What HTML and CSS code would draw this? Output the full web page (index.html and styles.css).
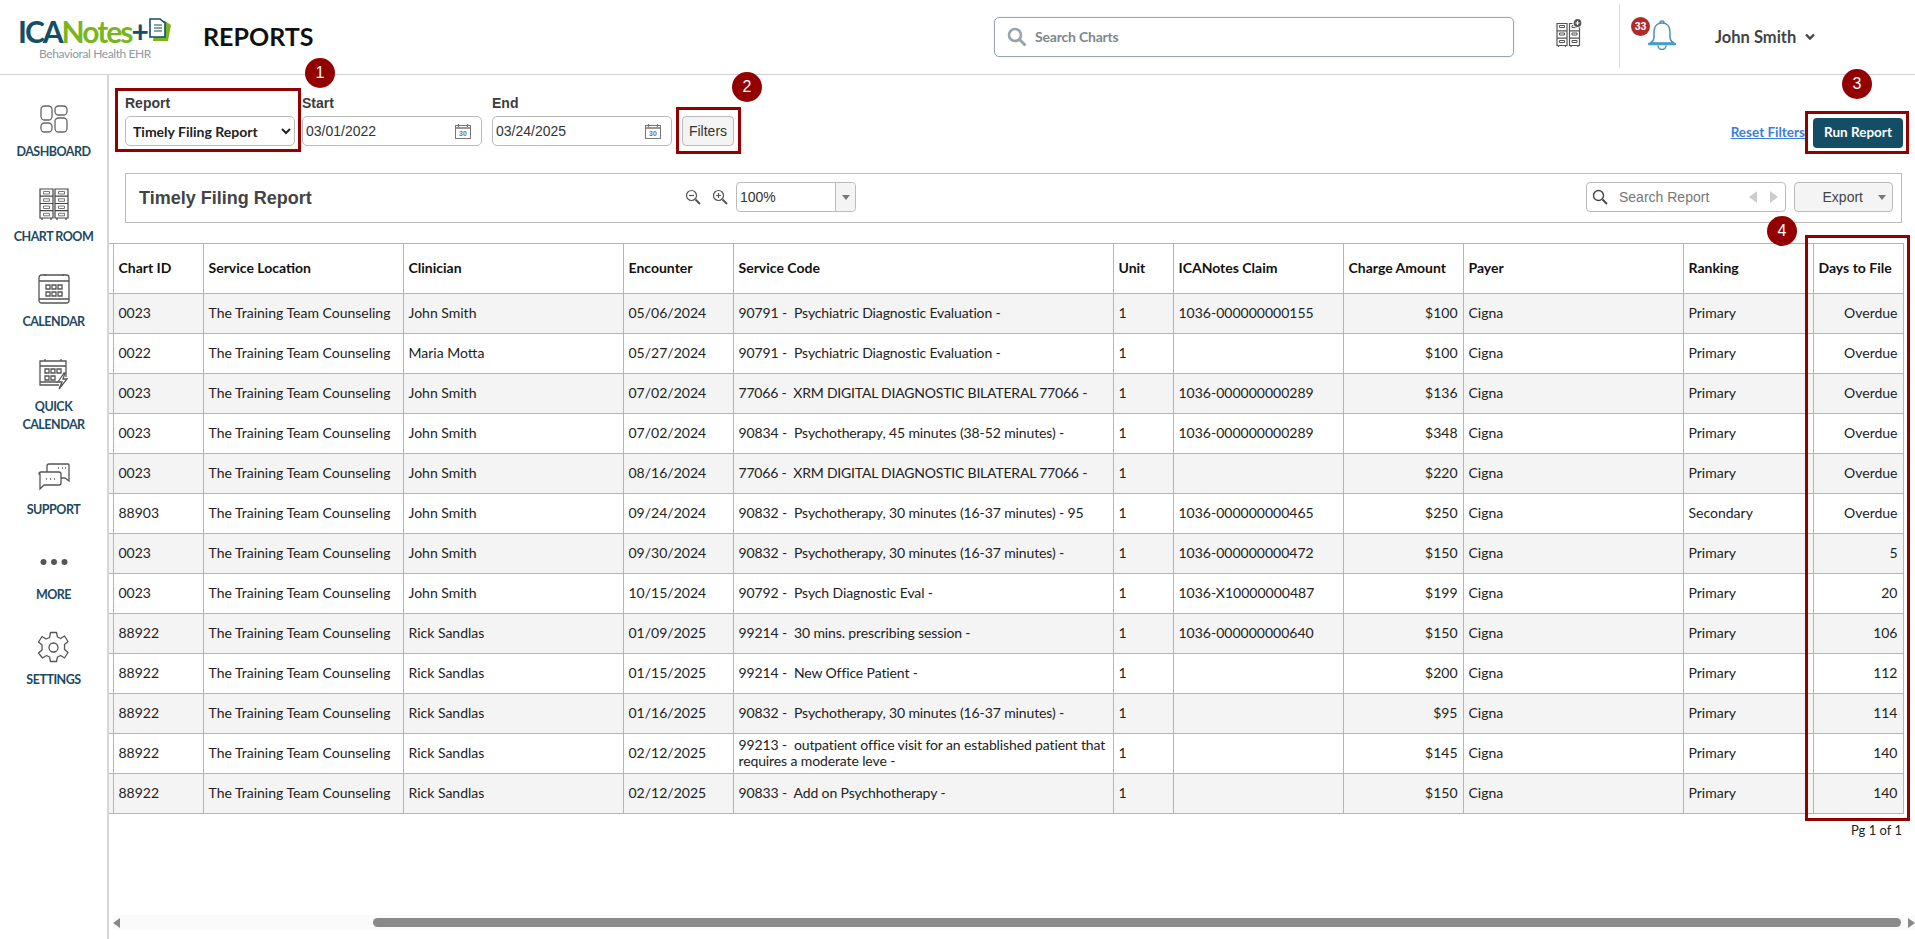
FILE: index.html
```html
<!DOCTYPE html>
<html lang="en">
<head>
<meta charset="utf-8">
<title>Reports</title>
<link rel="stylesheet" href="styles.css">
</head>
<body>
<div class="app">
  <header class="topbar">
    <div class="logo">
      <div class="logo-main"><span class="navy">ICA</span><span class="green">Notes</span><span class="navy">+</span>
        <svg class="logo-doc" width="23" height="26" viewBox="0 0 23 26"><path d="M7 4h9l6 4-3 16H4z" fill="#7ab51d"/><path d="M1 2h10l5 4v14H1z" fill="#fff" stroke="#134e66" stroke-width="1.6"/><path d="M5 8h8M5 11h8M5 14h8" stroke="#134e66" stroke-width="1"/></svg>
      </div>
      <div class="logo-sub">Behavioral Health EHR</div>
    </div>
    <h1 class="page-title">REPORTS</h1>
    <div class="chart-search">
      <svg width="20" height="20" viewBox="0 0 20 20"><circle cx="8" cy="8" r="6" fill="none" stroke="#98a3aa" stroke-width="2.6"/><path d="M12.5 12.5l6 6" stroke="#98a3aa" stroke-width="3"/></svg>
      <span>Search Charts</span>
    </div>
    <svg class="cabinet-add" width="28" height="30" viewBox="0 0 28 30" fill="none" stroke="#555" stroke-width="1.2">
      <path d="M1 5.500h10v22H1zM1 12.800h10M1 20.100h10M13.500 5.500h10v22h-10zM13.500 12.800h10M13.500 20.100h10M2.500 27.500v1.500M9.500 27.500v1.500M15 27.500v1.500M22 27.500v1.500"/>
      <path d="M3.500 7.500h5v2h-5zM3.500 15h5v2h-5zM3.500 22.500h5v2h-5zM16 7.500h5v2h-5zM16 15h5v2h-5zM16 22.500h5v2h-5z" stroke-width="1"/>
      <circle cx="21.500" cy="5" r="4.500" fill="#555" stroke="#fff"/><path d="M19.500 5h4M21.500 3v4" stroke="#fff"/>
    </svg>
    <div class="divider"></div>
    <div class="bell-wrap">
      <svg width="30" height="30" viewBox="0 0 30 30" fill="none" stroke="#4d8fb5" stroke-width="1.500"><path d="M15 3c-5.500 0-8 4-8 9v5c0 2.500-2 5-4 6h24c-2-1-4-3.500-4-6v-5c0-5-2.500-9-8-9z" fill="#fff"/><path d="M2 24h26" stroke="#3fa0d8" stroke-width="2.400" stroke-linecap="round"/><path d="M11 25.500a4 4 0 0 0 8 0"/><path d="M13 3a2 2 0 0 1 4 0"/></svg>
      <span class="badge">33</span>
    </div>
    <div class="user">John Smith</div>
    <svg class="user-caret" width="12" height="8" viewBox="0 0 12 8" fill="none" stroke="#444" stroke-width="2.400"><path d="M2 1.500l4 4 4-4"/></svg>
  </header>

  <div class="body-row">
    <nav class="sidebar">
      <a class="nav-item"><span class="nav-icon"><svg width="28" height="28" viewBox="0 0 28 28" fill="none" stroke="#666" stroke-width="1.300"><rect x="1" y="1" width="11" height="14" rx="3.500"/><rect x="15" y="1" width="12" height="9" rx="3.500"/><rect x="1" y="18" width="11" height="9" rx="3.500"/><rect x="15" y="13" width="12" height="14" rx="3.500"/></svg></span><span class="nav-label">DASHBOARD</span></a>
      <a class="nav-item"><span class="nav-icon"><svg width="30" height="33" viewBox="0 0 30 33" fill="none" stroke="#444" stroke-width="1.200"><path d="M1 1h13v29H1zM16 1h13v29H16zM1 8.200h13M1 15.500h13M1 22.700h13M16 8.200h13M16 15.500h13M16 22.700h13M3 30v2M12 30v2M18 30v2M27 30v2"/><path d="M4.500 3.500h6v2.500h-6zM4.500 10.800h6v2.500h-6zM4.500 18h6v2.500h-6zM4.500 25.300h6v2.500h-6zM19.500 3.500h6v2.500h-6zM19.500 10.800h6v2.500h-6zM19.500 18h6v2.500h-6zM19.500 25.300h6v2.500h-6z" stroke="#777" stroke-width="1"/></svg></span><span class="nav-label">CHART ROOM</span></a>
      <a class="nav-item"><span class="nav-icon"><svg width="32" height="32" viewBox="0 0 32 32" fill="none" stroke="#555" stroke-width="1.300"><rect x="1" y="2" width="30" height="28" rx="2.500"/><path d="M1 8h30M1 26h30M7 1v2M25 1v2"/><path d="M8 12h4v4H8zM14 12h4v4h-4zM20 12h4v4h-4zM8 19h4v4H8zM14 19h4v4h-4zM20 19h4v4h-4z"/></svg></span><span class="nav-label">CALENDAR</span></a>
      <a class="nav-item"><span class="nav-icon"><svg width="32" height="33" viewBox="0 0 32 33" fill="none" stroke="#555" stroke-width="1.300"><path d="M21 27H2V3h26v16"/><path d="M2 8h26M2 24h18M7 1v2M23 1v2"/><path d="M7 11h4v4H7zM13 11h4v4h-4zM19 11h4v4h-4zM7 18h4v4H7zM13 18h4v4h-4z"/><path d="M26 15l-6 9h4l-3 7 8-10h-4l2-6z" fill="#fff"/></svg></span><span class="nav-label">QUICK<br>CALENDAR</span></a>
      <a class="nav-item"><span class="nav-icon"><svg width="32" height="28" viewBox="0 0 32 28" fill="none" stroke="#555" stroke-width="1.300"><path d="M9 9V3a2 2 0 0 1 2-2h19a1 1 0 0 1 1 1v16l-4-3h-6"/><path d="M1 11a2 2 0 0 1 2-2h18a2 2 0 0 1 2 2v9a2 2 0 0 1-2 2H6l-4 4V11z" fill="#fff"/><path d="M8 16h1M12 16h1M16 16h1M20 5h1M24 5h1M27 5h1"/></svg></span><span class="nav-label">SUPPORT</span></a>
      <a class="nav-item"><span class="nav-icon"><svg width="28" height="8" viewBox="0 0 28 8" fill="#555"><circle cx="3.500" cy="4" r="3"/><circle cx="14" cy="4" r="3"/><circle cx="24.500" cy="4" r="3"/></svg></span><span class="nav-label">MORE</span></a>
      <a class="nav-item"><span class="nav-icon"><svg width="33" height="33" viewBox="0 0 33 33" fill="none" stroke="#555" stroke-width="1.300"><circle cx="16.500" cy="16.500" r="4.500"/><path d="M13.500 1.500h6l1 4.500 3 1.500 4-2.500 3.500 5.500-3.500 3v5l3.500 3-3.500 5.500-4-2.500-3 1.500-1 4.500h-6l-1-4.500-3-1.500-4 2.500L1.500 22l3.500-3v-5l-3.500-3L5 5.500l4 2.500 3.500-1.500z" stroke-linejoin="round"/></svg></span><span class="nav-label">SETTINGS</span></a>
    </nav>

    <main class="main">
      <section class="filters">
        <div class="field-group">
          <label class="field-label">Report</label>
          <select class="report-select"><option>Timely Filing Report</option></select>
        </div>
        <div class="field-group">
          <label class="field-label">Start</label>
          <div class="date-field"><span>03/01/2022</span>
            <svg width="16" height="16" viewBox="0 0 16 16" fill="none" stroke="#777"><rect x="0.500" y="2.500" width="15" height="13"/><path d="M0.500 5h15M3.500 1v3M12.500 1v3" stroke-width="1.300"/><text x="8" y="13" font-size="7" font-family="Liberation Sans" font-weight="700" text-anchor="middle" fill="#777" stroke="none">30</text></svg>
          </div>
        </div>
        <div class="field-group">
          <label class="field-label">End</label>
          <div class="date-field"><span>03/24/2025</span>
            <svg width="16" height="16" viewBox="0 0 16 16" fill="none" stroke="#777"><rect x="0.500" y="2.500" width="15" height="13"/><path d="M0.500 5h15M3.500 1v3M12.500 1v3" stroke-width="1.300"/><text x="8" y="13" font-size="7" font-family="Liberation Sans" font-weight="700" text-anchor="middle" fill="#777" stroke="none">30</text></svg>
          </div>
        </div>
        <button class="filters-btn">Filters</button>
        <div class="run-actions">
          <a class="reset-link">Reset Filters</a>
          <button class="run-btn">Run Report</button>
        </div>
      </section>

      <section class="report-toolbar">
        <div class="report-title">Timely Filing Report</div>
        <div class="zoom-tools">
          <svg width="16" height="16" viewBox="0 0 16 16" fill="none" stroke="#555" stroke-width="1.200"><circle cx="6.500" cy="6.500" r="5"/><path d="M4 6.500h5"/><path d="M10.500 10.500l4.500 4.500" stroke-width="2"/></svg>
          <svg width="16" height="16" viewBox="0 0 16 16" fill="none" stroke="#555" stroke-width="1.200"><circle cx="6.500" cy="6.500" r="5"/><path d="M4 6.500h5M6.500 4v5"/><path d="M10.500 10.500l4.500 4.500" stroke-width="2"/></svg>
          <div class="zoom-combo"><span class="zoom-value">100%</span><span class="zoom-arrow"><i class="tri"></i></span></div>
        </div>
        <div class="report-search">
          <svg width="16" height="16" viewBox="0 0 16 16" fill="none" stroke="#444" stroke-width="1.400"><circle cx="6.500" cy="6.500" r="5"/><path d="M10.500 10.500l4.500 4.500" stroke-width="1.800"/></svg>
          <span class="report-search-text">Search Report</span>
          <i class="tri-left"></i><i class="tri-right"></i>
        </div>
        <div class="export-btn"><span>Export</span><i class="tri"></i></div>
      </section>

      <table class="report-table">
        <colgroup>
          <col class="c-sp"><col class="c-id"><col class="c-loc"><col class="c-clin"><col class="c-enc"><col class="c-code"><col class="c-unit"><col class="c-claim"><col class="c-amt"><col class="c-payer"><col class="c-rank"><col class="c-days">
        </colgroup>
        <thead>
          <tr><th class="sp"></th><th>Chart ID</th><th>Service Location</th><th>Clinician</th><th>Encounter</th><th>Service Code</th><th>Unit</th><th>ICANotes Claim</th><th>Charge Amount</th><th>Payer</th><th>Ranking</th><th>Days to File</th></tr>
        </thead>
        <tbody>
          <tr><td class="sp"></td><td>0023</td><td>The Training Team Counseling</td><td>John Smith</td><td>05/06/2024</td><td class="code">90791 -&nbsp; Psychiatric Diagnostic Evaluation -</td><td>1</td><td>1036-000000000155</td><td class="r">$100</td><td>Cigna</td><td>Primary</td><td class="r">Overdue</td></tr>
          <tr><td class="sp"></td><td>0022</td><td>The Training Team Counseling</td><td>Maria Motta</td><td>05/27/2024</td><td class="code">90791 -&nbsp; Psychiatric Diagnostic Evaluation -</td><td>1</td><td></td><td class="r">$100</td><td>Cigna</td><td>Primary</td><td class="r">Overdue</td></tr>
          <tr><td class="sp"></td><td>0023</td><td>The Training Team Counseling</td><td>John Smith</td><td>07/02/2024</td><td class="code caps">77066 -&nbsp; XRM DIGITAL DIAGNOSTIC BILATERAL 77066 -</td><td>1</td><td>1036-000000000289</td><td class="r">$136</td><td>Cigna</td><td>Primary</td><td class="r">Overdue</td></tr>
          <tr><td class="sp"></td><td>0023</td><td>The Training Team Counseling</td><td>John Smith</td><td>07/02/2024</td><td class="code">90834 -&nbsp; Psychotherapy, 45 minutes (38-52 minutes) -</td><td>1</td><td>1036-000000000289</td><td class="r">$348</td><td>Cigna</td><td>Primary</td><td class="r">Overdue</td></tr>
          <tr><td class="sp"></td><td>0023</td><td>The Training Team Counseling</td><td>John Smith</td><td>08/16/2024</td><td class="code caps">77066 -&nbsp; XRM DIGITAL DIAGNOSTIC BILATERAL 77066 -</td><td>1</td><td></td><td class="r">$220</td><td>Cigna</td><td>Primary</td><td class="r">Overdue</td></tr>
          <tr><td class="sp"></td><td>88903</td><td>The Training Team Counseling</td><td>John Smith</td><td>09/24/2024</td><td class="code">90832 -&nbsp; Psychotherapy, 30 minutes (16-37 minutes) - 95</td><td>1</td><td>1036-000000000465</td><td class="r">$250</td><td>Cigna</td><td>Secondary</td><td class="r">Overdue</td></tr>
          <tr><td class="sp"></td><td>0023</td><td>The Training Team Counseling</td><td>John Smith</td><td>09/30/2024</td><td class="code">90832 -&nbsp; Psychotherapy, 30 minutes (16-37 minutes) -</td><td>1</td><td>1036-000000000472</td><td class="r">$150</td><td>Cigna</td><td>Primary</td><td class="r">5</td></tr>
          <tr><td class="sp"></td><td>0023</td><td>The Training Team Counseling</td><td>John Smith</td><td>10/15/2024</td><td class="code">90792 -&nbsp; Psych Diagnostic Eval -</td><td>1</td><td>1036-X10000000487</td><td class="r">$199</td><td>Cigna</td><td>Primary</td><td class="r">20</td></tr>
          <tr><td class="sp"></td><td>88922</td><td>The Training Team Counseling</td><td>Rick Sandlas</td><td>01/09/2025</td><td class="code">99214 -&nbsp; 30 mins. prescribing session -</td><td>1</td><td>1036-000000000640</td><td class="r">$150</td><td>Cigna</td><td>Primary</td><td class="r">106</td></tr>
          <tr><td class="sp"></td><td>88922</td><td>The Training Team Counseling</td><td>Rick Sandlas</td><td>01/15/2025</td><td class="code">99214 -&nbsp; New Office Patient -</td><td>1</td><td></td><td class="r">$200</td><td>Cigna</td><td>Primary</td><td class="r">112</td></tr>
          <tr><td class="sp"></td><td>88922</td><td>The Training Team Counseling</td><td>Rick Sandlas</td><td>01/16/2025</td><td class="code">90832 -&nbsp; Psychotherapy, 30 minutes (16-37 minutes) -</td><td>1</td><td></td><td class="r">$95</td><td>Cigna</td><td>Primary</td><td class="r">114</td></tr>
          <tr><td class="sp"></td><td>88922</td><td>The Training Team Counseling</td><td>Rick Sandlas</td><td>02/12/2025</td><td class="code">99213 -&nbsp; outpatient office visit for an established patient that requires a moderate leve -</td><td>1</td><td></td><td class="r">$145</td><td>Cigna</td><td>Primary</td><td class="r">140</td></tr>
          <tr><td class="sp"></td><td>88922</td><td>The Training Team Counseling</td><td>Rick Sandlas</td><td>02/12/2025</td><td class="code">90833 -&nbsp; Add on Psychhotherapy -</td><td>1</td><td></td><td class="r">$150</td><td>Cigna</td><td>Primary</td><td class="r">140</td></tr>
        </tbody>
      </table>
      <div class="pager">Pg 1 of 1</div>

      <div class="hscroll">
        <i class="tri-left dark"></i>
        <div class="hscroll-track"><div class="hscroll-thumb"></div></div>
        <i class="tri-right dark"></i>
      </div>
    </main>
  </div>

  <div class="mark mark-1"></div>
  <div class="mark mark-2"></div>
  <div class="mark mark-3"></div>
  <div class="mark mark-4"></div>
  <div class="step step-1">1</div>
  <div class="step step-2">2</div>
  <div class="step step-3">3</div>
  <div class="step step-4">4</div>
</div>
</body>
</html>
```
FILE: styles.css
```css
* { box-sizing: border-box; }
html, body { margin: 0; height: 100%; overflow: hidden; background: #fff; }
body { font-family: "Lato", "Liberation Sans", sans-serif; color: #222; }
.app { position: relative; height: 939px; display: flex; flex-direction: column; }

.topbar { height: 75px; flex: none; display: flex; align-items: center; border-bottom: 1px solid #d0d0d0; padding-left: 18px; }
.logo { width: 185px; flex: none; margin-top: 2px; }
.logo-main { display: flex; align-items: center; height: 30px; font-size: 30px; font-weight: 700; letter-spacing: -2px; line-height: 30px; white-space: nowrap; }
.navy { color: #134e66; }
.green { color: #7ab51d; }
.logo-doc { margin-left: 2px; margin-top: -1px; }
.logo-sub { font-size: 12px; line-height: 15px; letter-spacing: -0.4px; color: #8b9aa3; margin-left: 21px; }
.page-title { margin: 0 0 2px; width: 791px; flex: none; font-size: 25px; font-weight: 700; color: #111; line-height: 30px; }
.chart-search { width: 520px; height: 40px; flex: none; margin-bottom: 1px; display: flex; align-items: center; gap: 8px; padding-left: 12px; border: 1px solid #9aa5ad; border-radius: 5px; box-shadow: 0 0 2px #d8dde0; font-size: 14px; font-weight: 700; color: #7d878e; letter-spacing: -0.2px; }
.cabinet-add { margin-left: 42px; flex: none; margin-bottom: 8px; }
.divider { width: 1px; height: 64px; background: #d8d8d8; margin-left: 35px; margin-bottom: 2px; flex: none; }
.bell-wrap { position: relative; width: 36px; height: 32px; margin-left: 21px; flex: none; display: flex; justify-content: flex-end; margin-bottom: 3px; }
.badge { position: absolute; left: -10px; top: -3px; width: 19px; height: 19px; border-radius: 50%; background: #b02a2a; color: #fff; font: 700 10.500px/19px "Liberation Sans", sans-serif; text-align: center; }
.user { margin-left: 38px; font-size: 16.500px; font-weight: 700; color: #444; flex: none; }
.user-caret { margin-left: 8px; flex: none; }

.body-row { flex: 1; display: flex; min-height: 0; }
.sidebar { width: 109px; flex: none; display: flex; flex-direction: column; gap: 26px; padding-top: 27px; border-right: 2px solid #d6d6d6; }
.nav-item { display: flex; flex-direction: column; align-items: center; gap: 7px; }
.nav-icon { height: 34px; display: flex; align-items: center; justify-content: center; }
.nav-label { font-size: 12.500px; line-height: 18px; letter-spacing: -0.5px; font-weight: 700; color: #1d4a60; text-align: center; }

.main { flex: 1; min-width: 0; display: flex; flex-direction: column; }
.filters { display: flex; align-items: flex-end; padding: 20px 12px 0 16px; height: 71px; flex: none; }
.field-group { display: flex; flex-direction: column; gap: 5px; margin-right: 10px; }
.field-group:first-child { margin-right: 7px; }
.field-label { font: 700 14px/16px "Liberation Sans", sans-serif; color: #3c3c3c; }
.report-select { width: 170px; height: 30px; border: 1px solid #bbb; border-radius: 5px; padding: 0 0 0 3px; background: #fff; font: 700 14px "Lato", sans-serif; color: #222; }
.date-field { width: 180px; height: 30px; border: 1px solid #bbb; border-radius: 5px; display: flex; align-items: center; justify-content: space-between; padding: 0 10px 0 3px; font: 14px "Liberation Sans", sans-serif; color: #333; }
.filters-btn { width: 52px; height: 30px; border: 1px solid #bbb; border-radius: 4px; background: #f4f4f4; font: 14px "Liberation Sans", sans-serif; color: #333; padding: 0; }
.run-actions { margin-left: auto; display: flex; align-items: center; gap: 8px; margin-bottom: -2px; }
.reset-link { font-size: 13.500px; font-weight: 700; color: #3b7ddd; text-decoration: underline; position: relative; top: -1px; }
.run-btn { width: 90px; height: 30px; border: 0; border-radius: 4px; background: #134e66; color: #fff; font: 700 13.500px "Lato", sans-serif; padding: 0 0 2px; }

.report-toolbar { margin: 27px 13px 0 16px; height: 50px; flex: none; border: 1px solid #bbb; display: flex; align-items: center; padding: 0 8px 0 13px; }
.report-title { width: 546px; flex: none; padding-top: 1px; font: 700 18px "Liberation Sans", sans-serif; color: #444; }
.zoom-tools { display: flex; align-items: center; gap: 11px; margin-bottom: 2px; }
.zoom-combo { width: 120px; height: 30px; border: 1px solid #bbb; border-radius: 4px; display: flex; font: 14px/28px "Liberation Sans", sans-serif; color: #333; margin-left: -3px; }
.zoom-value { flex: 1; padding-left: 3px; }
.zoom-arrow { width: 20px; border-left: 1px solid #bbb; background: #f4f4f4; display: flex; align-items: center; justify-content: center; border-radius: 0 4px 4px 0; }
.tri { display: block; width: 0; height: 0; border: 4px solid transparent; border-top: 5px solid #777; border-bottom: 0; }
.report-search { margin-left: auto; margin-bottom: 2px; width: 200px; height: 30px; border: 1px solid #bbb; border-radius: 4px; display: flex; align-items: center; padding-left: 5px; font: 14px "Liberation Sans", sans-serif; color: #777; }
.report-search-text { margin-left: 11px; flex: 1; }
.tri-left, .tri-right { display: block; width: 0; height: 0; border: 6.500px solid transparent; }
.tri-left { border-right: 8px solid #ccc; border-left: 0; margin-right: 13px; }
.tri-right { border-left: 8px solid #ccc; border-right: 0; margin-right: 7px; }
.export-btn { margin-left: 8px; margin-bottom: 2px; width: 99px; height: 30px; border: 1px solid #bbb; border-radius: 4px; background: #f4f4f4; display: flex; align-items: center; justify-content: flex-end; gap: 15px; padding-right: 6px; font: 14px "Liberation Sans", sans-serif; color: #444; }

.report-table { margin-top: 20px; width: 1794px; flex: none; table-layout: fixed; border-collapse: collapse; font-size: 14px; line-height: 16px; color: #222; }
.c-sp { width: 4px; } .c-id { width: 90px; } .c-loc { width: 200px; } .c-clin { width: 220px; } .c-enc { width: 110px; } .c-code { width: 380px; } .c-unit { width: 60px; } .c-claim { width: 170px; } .c-amt { width: 120px; } .c-payer { width: 220px; } .c-rank { width: 130px; } .c-days { width: 90px; }
.report-table th, .report-table td { border: 1px solid #b5b5b5; padding: 0 5px 2px; text-align: left; vertical-align: middle; }
.report-table .sp { padding: 0; border-left: 0; }
.report-table .code { padding-right: 2px; letter-spacing: -0.12px; }
.report-table .caps { letter-spacing: -0.2px; }
.report-table thead tr { height: 50px; }
.report-table tbody tr { height: 40px; }
.report-table tbody tr:nth-child(odd) { background: #f4f4f4; }
.report-table th { font-weight: 700; color: #111; }
.report-table .r { text-align: right; }
.pager { flex: none; text-align: right; padding-right: 13px; margin-top: 8px; font-size: 13px; line-height: 16px; color: #222; }

.hscroll { margin-top: auto; margin-bottom: 9px; margin-left: 4px; height: 15px; flex: none; display: flex; align-items: center; background: #fafafa; }
.hscroll-track { flex: 1; height: 9px; padding-left: 253px; }
.hscroll-thumb { height: 9px; width: 1528px; border-radius: 5px; background: #8a8a8a; }
.tri-left.dark { border-width: 5px; border-left: 0; border-right: 7px solid #888; margin: 0; }
.tri-right.dark { border-width: 5px; border-right: 0; border-left: 7px solid #888; margin: 0; }

.mark { position: absolute; border: 3px solid #920000; pointer-events: none; }
.mark-1 { left: 115px; top: 88px; width: 186px; height: 64px; }
.mark-2 { left: 676px; top: 107px; width: 65px; height: 47px; }
.mark-3 { left: 1805px; top: 111px; width: 104px; height: 43px; }
.mark-4 { left: 1805px; top: 235px; width: 105px; height: 586px; }
.step { position: absolute; width: 30px; height: 30px; border-radius: 50%; background: #920000; color: #fff; font: 16px/30px "Liberation Sans", sans-serif; text-align: center; }
.step-1 { left: 305px; top: 58px; }
.step-2 { left: 732px; top: 72px; }
.step-3 { left: 1842px; top: 69px; }
.step-4 { left: 1767px; top: 216px; }
```
